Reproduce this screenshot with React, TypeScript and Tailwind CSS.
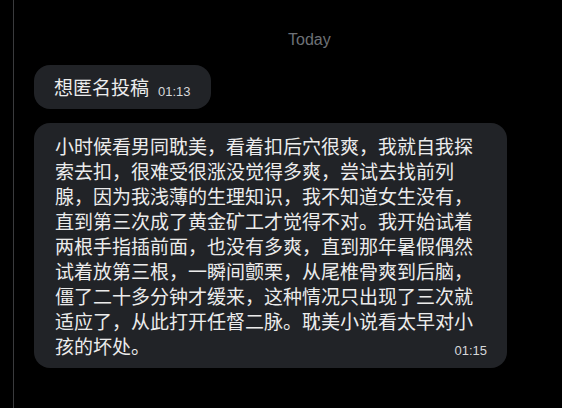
const lines = [
  '小时候看男同耽美，看着扣后穴很爽，我就自我探',
  '索去扣，很难受很涨没觉得多爽，尝试去找前列',
  '腺，因为我浅薄的生理知识，我不知道女生没有，',
  '直到第三次成了黄金矿工才觉得不对。我开始试着',
  '两根手指插前面，也没有多爽，直到那年暑假偶然',
  '试着放第三根，一瞬间颤栗，从尾椎骨爽到后脑，',
  '僵了二十多分钟才缓来，这种情况只出现了三次就',
  '适应了，从此打开任督二脉。耽美小说看太早对小',
]
const lastLine = '孩的坏处。'

const cjk = { fontFamily: '"Noto Sans CJK SC", "Noto Sans", sans-serif' }
const latin = { fontFamily: '"Liberation Sans", Arial, sans-serif' }

function Time({ value }: { value: string }) {
  return (
    <span className="text-[13px] leading-[14px] text-[#d6d8da] shrink-0" style={latin}>
      {value}
    </span>
  )
}

export default function App() {
  return (
    <div className="flex h-[408px] w-[562px] overflow-hidden bg-black">
      <div className="w-[13px] shrink-0" />
      <div className="w-px shrink-0 bg-[#3a3b3d]" />

      <div className="flex flex-1 flex-col pl-[20px]" style={cjk}>
        <div className="pt-[30px] pl-[254px] text-[16px] leading-[20px] text-[#6d7176]" style={latin}>
          Today
        </div>

        <div className="mt-[15px] flex h-[44px] w-fit items-end gap-[9px] whitespace-nowrap rounded-[16px] bg-[#212327] pl-[20px] pr-[20px] pb-[10px]">
          <span className="text-[19px] leading-[25px] text-[#ececec]">想匿名投稿</span>
          <Time value="01:13" />
        </div>

        <div className="mt-[14px] w-[473px] rounded-[16px] bg-[#212327] pl-[21px] pr-[20px] py-[10px] text-[19px] leading-[25px] text-[#ececec]">
          {lines.map(l => (
            <div key={l} className="whitespace-nowrap">
              {l}
            </div>
          ))}
          <div className="flex items-end justify-between">
            <span>{lastLine}</span>
            <Time value="01:15" />
          </div>
        </div>
      </div>
    </div>
  )
}
